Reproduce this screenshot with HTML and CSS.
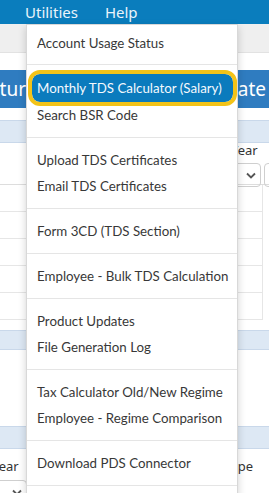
FILE: index.html
```html
<!DOCTYPE html>
<html lang="en">
<head>
  <meta charset="UTF-8">
  <title>Utilities</title>
  <link rel="stylesheet" href="styles.css">
</head>
<body>
  <nav class="topnav">
    <span class="nav-item">Utilities</span>
    <span class="nav-item">Help</span>
  </nav>
  <div class="subbar"></div>

  <div class="page">
    <div class="banner">
      <span class="banner-left">Return</span>
      <span class="banner-right">Update</span>
    </div>

    <div class="panel-head"></div>
    <div class="form-labels">
      <span class="label-year">Year</span>
    </div>
    <div class="form-selects">
      <div class="select-box">
        <svg class="chev" width="10" height="7" viewBox="0 0 10 7"><path d="M1 1.5 L5 5.5 L9 1.5" fill="none" stroke="#555" stroke-width="1.8"/></svg>
      </div>
      <div class="select-box small"></div>
    </div>

    <div class="table">
      <div class="row"></div>
      <div class="row"></div>
      <div class="row"></div>
      <div class="row"></div>
      <div class="row"></div>
    </div>

    <div class="panel-head second"></div>
    <div class="panel-body"></div>
    <div class="panel-head"></div>
    <div class="form-labels bottom">
      <span class="label-left">Year</span>
      <span class="label-right">Type</span>
    </div>
    <div class="form-selects bottom">
      <div class="select-box left">
        <svg class="chev" width="10" height="7" viewBox="0 0 10 7"><path d="M1 1.5 L5 5.5 L9 1.5" fill="none" stroke="#555" stroke-width="1.8"/></svg>
      </div>
    </div>
  </div>

  <div class="dropdown">
    <div class="group first">
      <div class="item">Account Usage Status</div>
    </div>
    <div class="group">
      <div class="item active">Monthly TDS Calculator (Salary)</div>
      <div class="item">Search BSR Code</div>
    </div>
    <div class="group">
      <div class="item">Upload TDS Certificates</div>
      <div class="item">Email TDS Certificates</div>
    </div>
    <div class="group">
      <div class="item">Form 3CD (TDS Section)</div>
    </div>
    <div class="group">
      <div class="item">Employee - Bulk TDS Calculation</div>
    </div>
    <div class="group">
      <div class="item">Product Updates</div>
      <div class="item">File Generation Log</div>
    </div>
    <div class="group">
      <div class="item">Tax Calculator Old/New Regime</div>
      <div class="item">Employee - Regime Comparison</div>
    </div>
    <div class="group">
      <div class="item">Download PDS Connector</div>
    </div>
    <div class="group">
      <div class="item">Video Tutorials</div>
    </div>
  </div>
</body>
</html>
```

FILE: styles.css
```css
body {
  margin: 0;
  font-family: 'Segoe UI', 'Noto Sans', sans-serif;
  background: white;
  overflow: hidden;
  position: relative;
}

.topnav {
  height: 24px;
  background: #0a7dbd;
  display: flex;
  gap: 27px;
  padding-left: 25px;
  align-items: center;
}

.nav-item {
  color: #eaf4fb;
  font-size: 15px;
}

.subbar {
  height: 28px;
  background: #efefef;
  border-bottom: 1px solid #e2e2e2;
}

.page {
  padding-top: 17px;
}

.banner {
  height: 38px;
  background: #2f7cc0;
  display: flex;
  justify-content: space-between;
  align-items: center;
  color: white;
  font-size: 19px;
  overflow: hidden;
}

.banner-left {
  margin-left: -23px;
}

.banner-right {
  margin-right: 3px;
}

.panel-head {
  height: 21px;
  background: #dde8f4;
  border-top: 1px solid #c9d8ea;
  border-bottom: 1px solid #c9d8ea;
  margin-top: 12px;
}

.panel-head.second {
  margin-top: 10px;
  height: 18px;
}

.panel-body {
  height: 64px;
}

.form-labels {
  height: 14px;
  line-height: 14px;
  font-size: 13px;
  color: #333;
}

.label-year {
  margin-left: 231px;
}

.form-labels.bottom {
  display: flex;
  justify-content: space-between;
  padding-top: 10px;
}

.label-left {
  margin-left: -8px;
}

.label-right {
  margin-right: 16px;
}

.form-selects {
  display: flex;
  gap: 3px;
  padding: 6px 0 0 180px;
  height: 21px;
}

.form-selects.bottom {
  padding: 7px 0 0 0;
}

.select-box {
  flex-shrink: 0;
  width: 79px;
  height: 22px;
  border: 1px solid #cfcfcf;
  border-radius: 4px;
  position: relative;
}

.select-box.small {
  width: 40px;
}

.select-box.left {
  width: 30px;
  margin-left: -5px;
}

.chev {
  position: absolute;
  right: 4px;
  top: 8px;
}

.table {
  border-top: 1px solid #ddd;
}

.row {
  height: 26px;
  border-bottom: 1px solid #e6e6e6;
  border-right: 1px solid #e6e6e6;
  margin-right: 6px;
}

.dropdown {
  position: absolute;
  left: 26px;
  top: 24px;
  width: 210px;
  background: white;
  border: 1px solid #d8d8d8;
  box-shadow: 0 3px 8px rgba(0, 0, 0, 0.18);
}

.group {
  padding: 9px 0;
  border-top: 1px solid #e5e5e5;
}

.group.first {
  padding: 5px 0 8px;
  border-top: none;
}

.item {
  height: 26px;
  line-height: 26px;
  padding-left: 10px;
  font-family: 'Segoe UI', Lato, sans-serif;
  font-size: 13.3px;
  color: #383838;
  white-space: nowrap;
}

.item.active {
  height: 28px;
  line-height: 28px;
  margin: 0 4px 0 5px;
  padding-left: 5px;
  background: #0b7bbd;
  color: #f4f9fd;
  border-radius: 8px;
  outline: 4px solid #f3c318;
}
```
